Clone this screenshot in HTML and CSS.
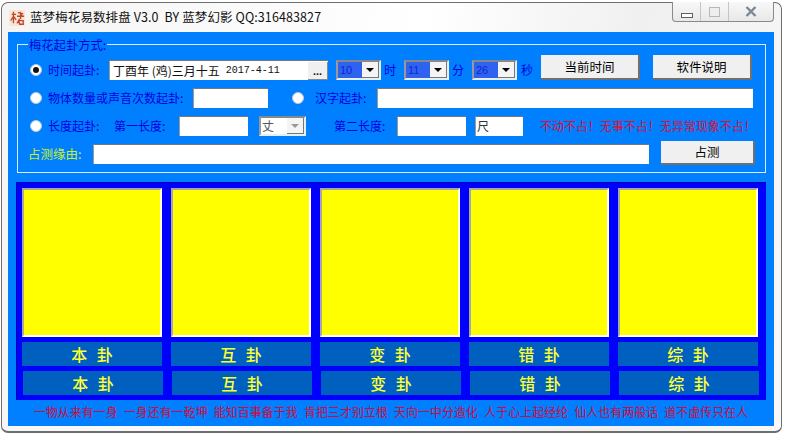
FILE: index.html
```html
<!DOCTYPE html>
<html lang="zh">
<head>
<meta charset="utf-8">
<title>蓝梦梅花易数排盘</title>
<link rel="stylesheet" href="styles.css">
</head>
<body>
<div class="window">
  <div class="titlebar">
    <svg class="logo" width="16" height="16" viewBox="0 0 18 18"><rect width="18" height="18" fill="#f6e6d4"/><path d="M3 5h5M5 2v13M5 7l-3 5M5 7l3 4M10 3l6 1M9 7h8M13 2v8M12 10l-3 5M11 12h5v4h-4zM15 5l-3 3" stroke="#c2452e" stroke-width="1.500" fill="none"/></svg>
    <span class="title">蓝梦梅花易数排盘 V3.0&nbsp; BY 蓝梦幻影 QQ:316483827</span>
    <div class="controls">
      <span class="ctl ctl-min"><i class="min-glyph"></i></span>
      <span class="ctl ctl-max"><i class="max-glyph"></i></span>
      <span class="ctl ctl-close"><svg width="12" height="11" viewBox="0 0 12 11"><path d="M1.500 1l9 9M10.500 1l-9 9" stroke="#7d8794" stroke-width="2.400" fill="none"/></svg></span>
    </div>
  </div>
  <div class="client">
    <div class="group">
      <span class="legend">梅花起卦方式:</span>
      <div class="row row1">
        <span class="radio checked"></span><span class="lbl w-time">时间起卦:</span>
        <div class="datebox"><span class="date-cn">丁酉年 (鸡)三月十五</span><span class="date-num">2017-4-11</span><span class="dots">...</span></div>
        <div class="combo c1"><span class="val">10</span><span class="arrow"></span></div><span class="lbl unit">时</span>
        <div class="combo"><span class="val">11</span><span class="arrow"></span></div><span class="lbl unit">分</span>
        <div class="combo"><span class="val">26</span><span class="arrow"></span></div><span class="lbl unit unit-last">秒</span>
        <button class="btn b1">当前时间</button>
        <button class="btn b2">软件说明</button>
      </div>
      <div class="row">
        <span class="radio"></span><span class="lbl w-obj">物体数量或声音次数起卦:</span>
        <span class="field f-obj"></span>
        <span class="radio r-han"></span><span class="lbl w-han">汉字起卦:</span>
        <span class="field f-han"></span>
      </div>
      <div class="row">
        <span class="radio"></span><span class="lbl w-time">长度起卦:</span>
        <span class="lbl w-len1">第一长度:</span>
        <span class="field f-len"></span>
        <div class="combo disabled"><span class="val">丈</span><span class="arrow"></span></div>
        <span class="lbl w-len2">第二长度:</span>
        <span class="field f-len"></span>
        <span class="field f-unit">尺</span>
        <span class="warn">不动不占！无事不占！无异常现象不占！</span>
      </div>
      <div class="row row4">
        <span class="lbl-yellow">占测缘由:</span>
        <span class="field f-reason"></span>
        <button class="btn b3">占测</button>
      </div>
    </div>
    <div class="board">
      <div class="col"><div class="gua"></div><div class="cap">本 卦</div><div class="cap cap2">本 卦</div></div>
      <div class="col"><div class="gua"></div><div class="cap">互 卦</div><div class="cap cap2">互 卦</div></div>
      <div class="col"><div class="gua"></div><div class="cap">变 卦</div><div class="cap cap2">变 卦</div></div>
      <div class="col"><div class="gua"></div><div class="cap">错 卦</div><div class="cap cap2">错 卦</div></div>
      <div class="col"><div class="gua"></div><div class="cap">综 卦</div><div class="cap cap2">综 卦</div></div>
    </div>
    <p class="poem">一物从来有一身 一身还有一乾坤 能知百事备于我 肯把三才别立根 天向一中分造化 人于心上起经纶 仙人也有两般话 道不虚传只在人</p>
  </div>
</div>
</body>
</html>
```

FILE: styles.css
```css
* { box-sizing: border-box; }
html, body { margin: 0; padding: 0; background: #fff; }
body { width: 785px; height: 436px; overflow: hidden; padding: 2px 3px 3px 1px; font-family: "Noto Sans CJK SC", "Liberation Sans", sans-serif; }
.window {
  width: 781px; height: 431px; padding: 0 7px 5px 6px;
  background: linear-gradient(100deg, #f4f4f4, #ffffff 50%, #f0f0f0 75%, #f8f8f8);
  border: 1px solid #6e6e6e; border-bottom-width: 2px; border-radius: 7px;
  display: flex; flex-direction: column;
}
.titlebar { height: 29px; flex: none; display: flex; align-items: center; position: relative; }
.logo { margin-left: 1px; flex: none; }
.title { margin: -2px 0 0 5px; font-size: 12.500px; letter-spacing: .1px; color: #111; white-space: nowrap; }
.controls { position: absolute; right: 0; top: -1px; display: flex; height: 20px; border: 1px solid #8a8a8a; border-top: 0; border-radius: 0 0 4px 4px; background: linear-gradient(#f8f8f8, #e8e8e8); }
.ctl { display: flex; align-items: center; justify-content: center; height: 100%; border-right: 1px solid #c4c4c4; }
.ctl-min { width: 28px; } .ctl-max { width: 28px; } .ctl-close { width: 44px; border-right: 0; }
.min-glyph { width: 12px; height: 5px; margin-top: 7px; border: 1px solid #5a5f68; background: #fff; }
.max-glyph { width: 11px; height: 10px; border: 1px solid #b5b8bd; background: #eee; }
.client { flex: 1; background: #0080ff; padding: 12px 0 0 8px; display: flex; flex-direction: column; }
.group { position: relative; height: 129px; width: 749px; margin-left: 1px; border: 1px solid #d4ecff; padding: 15px 0 0 12px; }
.legend { position: absolute; left: 10px; top: -7px; padding: 0 1px; background: #0080ff; font-size: 12.300px; line-height: 14px; color: #0000e0; white-space: nowrap; }
.row { display: flex; align-items: center; height: 20px; margin-bottom: 8px; }
.radio { width: 12px; height: 12px; flex: none; border-radius: 50%; background: #fff; border: 1px solid #b9c8d8; display: flex; align-items: center; justify-content: center; }
.radio.checked::after { content: ""; width: 6px; height: 6px; border-radius: 50%; background: #111; }
.lbl, .lbl-yellow, .warn { font-size: 12px; line-height: 20px; white-space: nowrap; color: #0000e0; flex: none; }
.w-time { margin-left: 6px; width: 61px; }
.datebox { width: 219px; height: 20px; background: #fff; border-top: 1px solid #777; border-left: 1px solid #999; display: flex; align-items: center; padding-left: 3px; flex: none; color: #111; }
.date-cn { font-size: 12px; white-space: nowrap; }
.date-num { font-family: "Liberation Mono", monospace; font-size: 10px; margin-left: 6px; white-space: nowrap; }
.dots { margin-left: auto; width: 20px; height: 18px; background: #f0f0f0; border-right: 1px solid #888; border-bottom: 1px solid #888; font: bold 11px "Liberation Sans", sans-serif; text-align: center; line-height: 18px; }
.combo { width: 45px; height: 20px; flex: none; background: #fff; border: 2px solid #e6eef6; border-top-color: #888; border-left-color: #999; display: flex; align-items: stretch; }
.c1 { margin-left: 8px; }
.val { flex: 1; background: #2f62ee; color: #0a2ad0; font-size: 11px; line-height: 16px; padding-left: 2px; font-family: "Liberation Sans", sans-serif; }
.arrow { width: 17px; flex: none; background: #f4f4f4; border-right: 1px solid #777; border-bottom: 1px solid #777; position: relative; }
.arrow::after { content: ""; position: absolute; left: 4px; top: 6px; border: 4px solid transparent; border-top: 4px solid #000; border-bottom: 0; }
.unit { width: 23px; padding-left: 3px; }
.unit-last { width: 24px; padding-left: 4px; }
.btn { height: 25px; flex: none; background: #f0f0f0; border: 0; border-right: 2px solid #707070; border-bottom: 2px solid #707070; font-family: inherit; font-size: 12.500px; color: #000; padding: 0; }
.b1 { width: 99px; margin-top: -5px; }
.b2 { width: 99px; margin: -5px 0 0 13px; }
.b3 { width: 94px; height: 24px; margin: -3px 0 0 12px; }
.field { height: 20px; background: #fff; flex: none; border-top: 1px solid #777; border-left: 1px solid #999; font-size: 12px; line-height: 18px; padding-left: 1px; color: #333; }
.w-obj { margin-left: 6px; width: 145px; }
.f-obj { width: 75px; }
.r-han { margin-left: 24px; }
.w-han { margin-left: 11px; width: 62px; }
.f-han { width: 376px; }
.w-len1 { margin-left: 5px; width: 65px; }
.f-len { width: 69px; }
.disabled { margin-left: 11px; width: 47px; }
.disabled .val { background: #fff; color: #555; font-size: 12px; padding-left: 1px; font-family: inherit; }
.disabled .arrow::after { border-top-color: #999; }
.w-len2 { margin-left: 28px; width: 63px; }
.f-unit { width: 48px; margin-left: 9px; }
.warn { margin-left: 17px; color: #d8103a; font-size: 12px; }
.row4 { margin: 0; }
.lbl-yellow { margin-left: -2px; width: 65px; font-size: 12.500px; color: #c8f030; }
.f-reason { width: 556px; }
.board { margin-top: 9px; height: 218px; width: 750px; background: #0000ff; box-shadow: inset 1px 1px 0 #0000b0; display: flex; gap: 9px; padding: 6px 8px 5px 6px; }
.col { flex: 1; display: flex; flex-direction: column; min-width: 0; }
.gua { height: 149px; background: #ffff00; border: 2px solid #fff; border-top-color: #a8a8a0; border-left-color: #a8a8a0; }
.cap { height: 24px; margin-top: 5px; background: #0060c0; color: #ffff30; font-size: 16px; font-weight: 500; line-height: 24px; text-align: center; word-spacing: 6px; white-space: pre; }
.cap2 { margin-left: 1px; margin-right: -1px; }
.poem { margin: 3px 0 0; padding-right: 8px; text-align: center; font-size: 12px; line-height: 18px; word-spacing: 3.400px; color: #d00a3c; white-space: nowrap; }
```
